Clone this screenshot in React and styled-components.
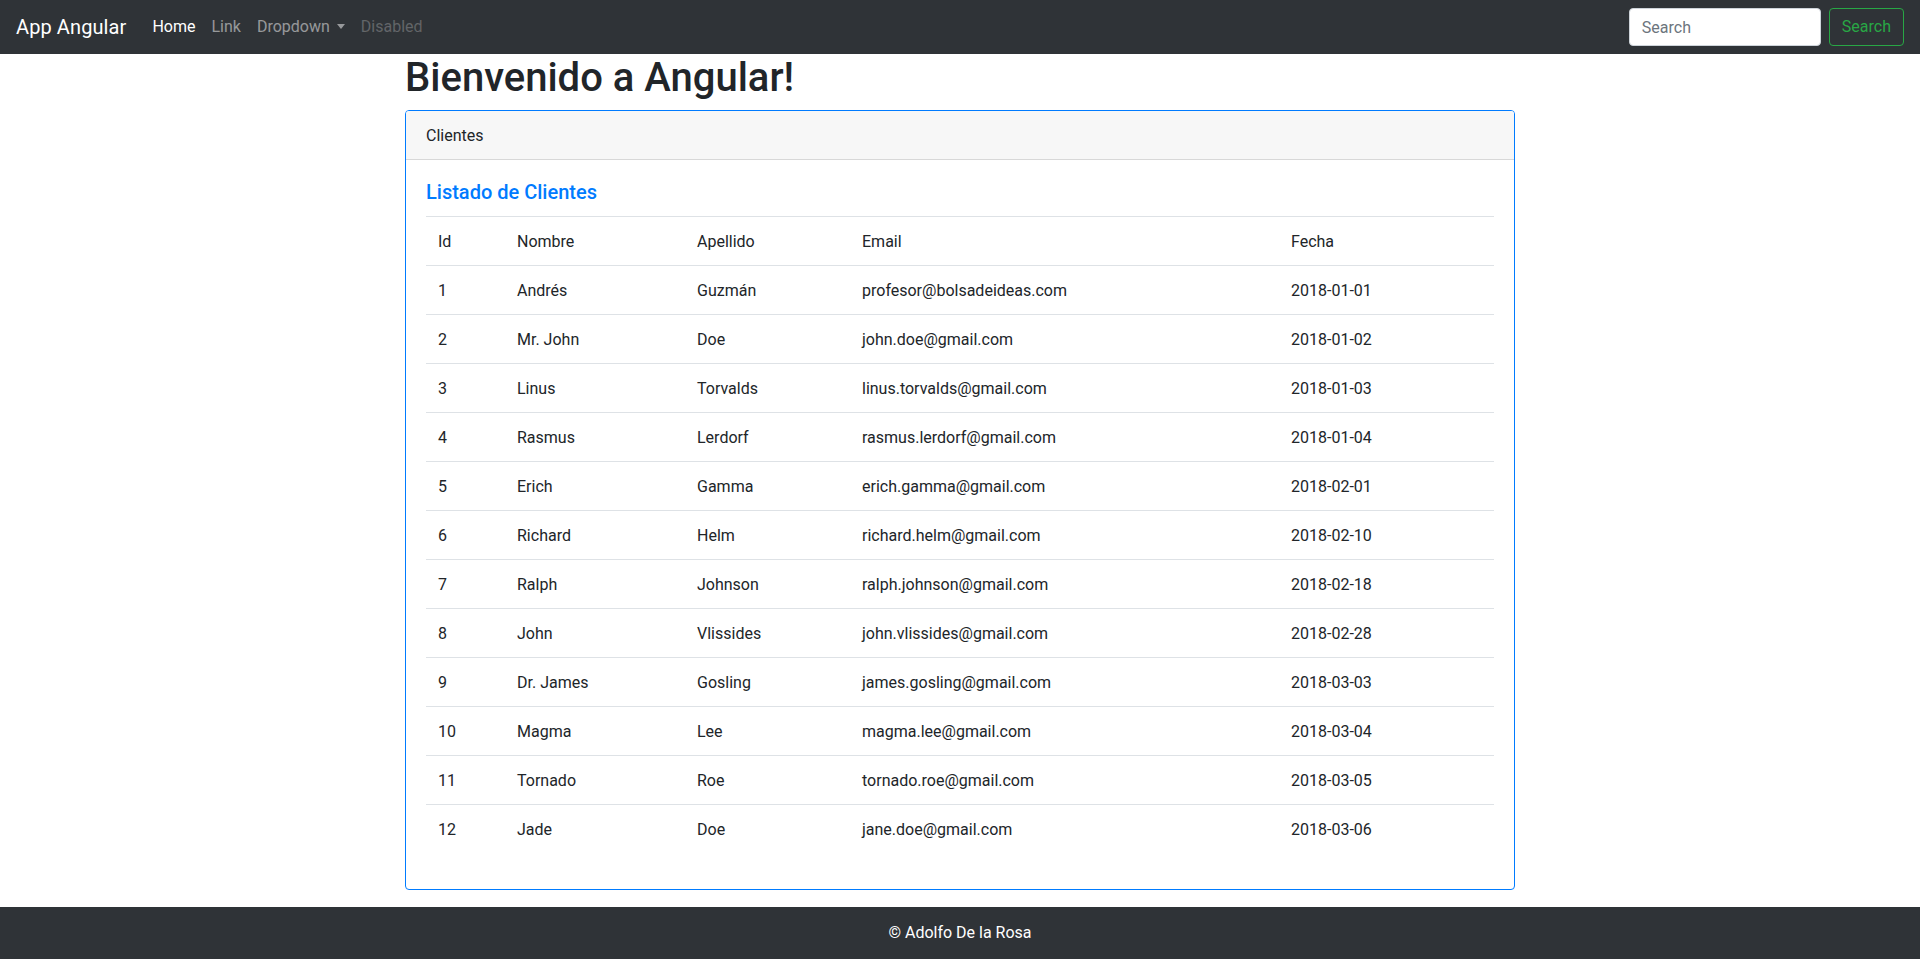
import React from "react";
import styled, { createGlobalStyle } from "styled-components";

const GlobalStyle = createGlobalStyle`
  * {
    box-sizing: border-box;
  }
  body {
    margin: 0;
    font-family: Roboto, Inter, "Noto Sans", "Liberation Sans", sans-serif;
    font-size: 16px;
    line-height: 1.5;
    color: #212529;
    background: #fff;
  }
`;

const Navbar = styled.nav`
  display: flex;
  align-items: center;
  height: 54px;
  padding: 8px 16px;
  background: #2f3337;
`;

const Brand = styled.a`
  font-size: 20px;
  line-height: 30px;
  color: #fff;
  margin-right: 18px;
  letter-spacing: 0.1px;
  text-decoration: none;
`;

const NavList = styled.ul`
  display: flex;
  list-style: none;
  margin: 0;
  padding: 0;
  flex: 1;
`;

const NavLink = styled.a`
  display: flex;
  align-items: center;
  padding: 8px;
  color: ${(p) =>
    p.active ? "#fff" : p.disabled ? "rgba(255,255,255,.25)" : "rgba(255,255,255,.5)"};
  text-decoration: none;
  cursor: ${(p) => (p.disabled ? "default" : "pointer")};
`;

const Caret = styled.span`
  display: inline-block;
  margin-left: 7px;
  border-top: 5px solid currentColor;
  border-left: 4.5px solid transparent;
  border-right: 4.5px solid transparent;
  margin-top: -2px;
`;

const SearchForm = styled.form`
  display: flex;
  align-items: center;
  gap: 8px;
`;

const SearchInput = styled.input`
  width: 192px;
  height: 38px;
  padding: 6px 12px;
  font: inherit;
  color: #495057;
  border: 1px solid #ced4da;
  border-radius: 4px;
  background: #fff;
  &::placeholder {
    color: #6c757d;
  }
`;

const OutlineButton = styled.button`
  height: 38px;
  padding: 6px 12px;
  font: inherit;
  color: #28a745;
  background: transparent;
  border: 1px solid #28a745;
  border-radius: 4px;
  cursor: pointer;
`;

const Container = styled.main`
  width: 1140px;
  margin: 0 auto;
  padding: 0 15px;
`;

const Title = styled.h1`
  margin: 0 0 8px;
  font-size: 40px;
  font-weight: 500;
  line-height: 1.2;
`;

const Card = styled.section`
  border: 1px solid #007bff;
  border-radius: 4px;
  overflow: hidden;
`;

const CardHeader = styled.div`
  padding: 13px 20px 11px;
  background: #f7f7f7;
  border-bottom: 1px solid rgba(0, 0, 0, 0.125);
`;

const CardBody = styled.div`
  padding: 20px;
`;

const CardTitle = styled.h5`
  margin: 0 0 12px;
  font-size: 20px;
  font-weight: 500;
  line-height: 1.2;
  color: #007bff;
`;

const Table = styled.table`
  width: 100%;
  margin-bottom: 16px;
  border-collapse: collapse;
  table-layout: fixed;
`;

const Cell = styled.td`
  padding: 13px 12px 11px;
  line-height: 24px;
  text-align: left;
  font-weight: 400;
  border-top: 1px solid #dee2e6;
  vertical-align: top;
`;

const Footer = styled.footer`
  margin-top: 17px;
  height: 52px;
  display: flex;
  align-items: center;
  justify-content: center;
  background: #2f3337;
  color: #fff;
  font-weight: 400;
`;

const columns = [
  { label: "Id", width: 79 },
  { label: "Nombre", width: 180 },
  { label: "Apellido", width: 165 },
  { label: "Email", width: 429 },
  { label: "Fecha", width: 215 },
];

const clientes = [
  [1, "Andrés", "Guzmán", "profesor@bolsadeideas.com", "2018-01-01"],
  [2, "Mr. John", "Doe", "john.doe@gmail.com", "2018-01-02"],
  [3, "Linus", "Torvalds", "linus.torvalds@gmail.com", "2018-01-03"],
  [4, "Rasmus", "Lerdorf", "rasmus.lerdorf@gmail.com", "2018-01-04"],
  [5, "Erich", "Gamma", "erich.gamma@gmail.com", "2018-02-01"],
  [6, "Richard", "Helm", "richard.helm@gmail.com", "2018-02-10"],
  [7, "Ralph", "Johnson", "ralph.johnson@gmail.com", "2018-02-18"],
  [8, "John", "Vlissides", "john.vlissides@gmail.com", "2018-02-28"],
  [9, "Dr. James", "Gosling", "james.gosling@gmail.com", "2018-03-03"],
  [10, "Magma", "Lee", "magma.lee@gmail.com", "2018-03-04"],
  [11, "Tornado", "Roe", "tornado.roe@gmail.com", "2018-03-05"],
  [12, "Jade", "Doe", "jane.doe@gmail.com", "2018-03-06"],
];

export default function App() {
  return (
    <>
      <GlobalStyle />
      <Navbar>
        <Brand href="#">App Angular</Brand>
        <NavList>
          <li>
            <NavLink active>Home</NavLink>
          </li>
          <li>
            <NavLink>Link</NavLink>
          </li>
          <li>
            <NavLink>
              Dropdown
              <Caret />
            </NavLink>
          </li>
          <li>
            <NavLink disabled>Disabled</NavLink>
          </li>
        </NavList>
        <SearchForm onSubmit={(e) => e.preventDefault()}>
          <SearchInput type="search" placeholder="Search" />
          <OutlineButton type="submit">Search</OutlineButton>
        </SearchForm>
      </Navbar>

      <Container>
        <Title>Bienvenido a Angular!</Title>
        <Card>
          <CardHeader>Clientes</CardHeader>
          <CardBody>
            <CardTitle>Listado de Clientes</CardTitle>
            <Table>
              <colgroup>
                {columns.map((c) => (
                  <col key={c.label} style={{ width: c.width }} />
                ))}
              </colgroup>
              <thead>
                <tr>
                  {columns.map((c) => (
                    <Cell as="th" key={c.label}>
                      {c.label}
                    </Cell>
                  ))}
                </tr>
              </thead>
              <tbody>
                {clientes.map((row) => (
                  <tr key={row[0]}>
                    {row.map((v, i) => (
                      <Cell key={i}>{v}</Cell>
                    ))}
                  </tr>
                ))}
              </tbody>
            </Table>
          </CardBody>
        </Card>
      </Container>

      <Footer>© Adolfo De la Rosa</Footer>
    </>
  );
}
